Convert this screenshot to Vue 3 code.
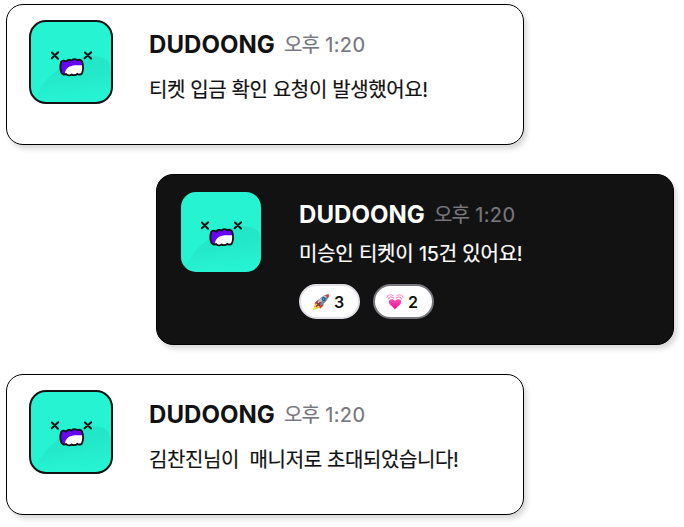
<script setup>
const messages = [
  { id: 1, dark: false, text: '티켓 입금 확인 요청이 발생했어요!', reactions: [] },
  {
    id: 2,
    dark: true,
    text: '미승인 티켓이 15건 있어요!',
    reactions: [
      { kind: 'rocket', count: 3 },
      { kind: 'heart', count: 2 },
    ],
  },
  { id: 3, dark: false, text: '김찬진님이  매니저로 초대되었습니다!', reactions: [] },
]
</script>

<template>
  <main class="thread">
    <article v-for="m in messages" :key="m.id" class="card" :class="{ dark: m.dark }">
      <svg class="avatar" viewBox="0 0 84 84">
        <defs>
          <linearGradient :id="'hill' + m.id" x1="0.3" y1="0" x2="0.5" y2="1">
            <stop offset="0" stop-color="#22e5c5" />
            <stop offset="0.45" stop-color="#23e8c9" />
            <stop offset="0.95" stop-color="#26f3d2" />
          </linearGradient>
        </defs>
        <rect x="1" y="1" width="82" height="82" rx="16" fill="#26f3d2" />
        <path d="M7 77C13 61 27 49 41 43C51 36.500 64 35 73 37.500C80 40 82 45 82 56V68C82 76 76 81 68 81H16Z" :fill="`url(#hill${m.id})`" />
        <rect x="1" y="1" width="82" height="82" rx="16" fill="none" stroke="#121212" stroke-width="2" />
        <g fill="none" stroke="#121212" stroke-width="2" stroke-linecap="round">
          <path d="M23 32.500L29 38.800M29.200 32.300L22.800 38.300M56 32.500L62 38.500M62.200 32.300L55.600 38.300" />
        </g>
        <path d="M32.200 41.700C33.200 40 36.200 40.500 37.400 41.700C37.800 39.800 41.400 39.300 42.600 40.600C43.600 38.700 47.400 38.800 48.300 40.300C49.800 39.300 52.400 39.800 53 41.300C54.300 44.700 54.300 50 52.800 53.700C51.700 55 49.300 54.900 48.300 53.800C46.800 55.500 43.800 55.500 42.700 54.500C41 56 38.200 55.400 37.200 54C35.300 55.100 33.100 54.400 32.300 52.500C31.100 49.300 31 45.100 32.200 41.700Z" fill="#6506f5" />
        <path d="M36 53.500C36.100 48.500 41 45.300 46 45.200H53.500V53.500L48.300 53.800C46.500 55 44.300 55 42.700 54.500C40.700 55.500 38.300 55.200 37.200 54Z" fill="#fff" />
        <path d="M32.200 41.700C33.200 40 36.200 40.500 37.400 41.700C37.800 39.800 41.400 39.300 42.600 40.600C43.600 38.700 47.400 38.800 48.300 40.300C49.800 39.300 52.400 39.800 53 41.300C54.300 44.700 54.300 50 52.800 53.700C51.700 55 49.300 54.900 48.300 53.800C46.800 55.500 43.800 55.500 42.700 54.500C41 56 38.200 55.400 37.200 54C35.300 55.100 33.100 54.400 32.300 52.500C31.100 49.300 31 45.100 32.200 41.700Z" fill="none" stroke="#121212" stroke-width="1.800" stroke-linejoin="round" />
      </svg>
      <div class="content">
        <header class="head">
          <span class="name">DUDOONG</span>
          <span class="time"><span class="ko">오후</span> 1:20</span>
        </header>
        <p class="text">{{ m.text }}</p>
        <div v-if="m.reactions.length" class="reactions">
          <span v-for="r in m.reactions" :key="r.kind" class="pill" :class="r.kind">
            <svg v-if="r.kind === 'rocket'" class="emoji" viewBox="0 0 18 18">
              <path d="M1 17L3.200 9.800L8.500 14.500Z" fill="#ffb52b" />
              <path d="M1 17L5 10.500L7.300 13Z" fill="#fff05a" />
              <path d="M2.400 10.200L6 6.700L8.700 6.500L6 11.200ZM7 12L11.300 9.200L11.400 12.400L8 15.800Z" fill="#e92e22" />
              <path d="M4.800 10.800C6.200 6.200 10.800 1.800 16.800 1.200C16.900 6.400 12 11.500 7.200 13.300Z" fill="#718da3" />
              <path d="M5 10.600C7 5.700 11.300 2.400 16.600 1.400L6.300 11.800Z" fill="#b9cad6" />
              <path d="M13.200 1.900L16.800 1.200C16.900 2.800 16.600 4 16.100 5.200Z" fill="#dc372d" />
              <circle cx="11.600" cy="6.100" r="2" fill="#174f79" />
              <circle cx="11.500" cy="6" r="1.100" fill="#36a8dc" />
              <path d="M4.800 10.800L7.300 13.200L8.700 12.500L5.300 9.300Z" fill="#3c4b59" />
              <path d="M4.300 13.500L8.300 9.600" stroke="#b51e22" stroke-width="1.400" stroke-linecap="round" />
            </svg>
            <svg v-else class="emoji" viewBox="0 0 18 18">
              <defs>
                <linearGradient id="pink" x1="0" y1="0" x2="0" y2="1">
                  <stop offset="0" stop-color="#ff4fb0" />
                  <stop offset="1" stop-color="#ee0a98" />
                </linearGradient>
              </defs>
              <path d="M9 16.700C7.600 13.900 2.800 12.200 2.800 8.600C2.800 5.600 7.400 5.300 9 8C10.600 5.300 15.200 5.600 15.200 8.600C15.200 12.200 10.400 13.900 9 16.700Z" fill="url(#pink)" />
              <g fill="none" stroke-linecap="round" stroke-width="1.100">
                <path d="M2.600 5.700C3.300 3.800 5.700 3.400 7.600 5M15.400 5.700C14.700 3.800 12.300 3.400 10.400 5" stroke="#ff78c2" />
                <path d="M0.900 4.500C1.700 1.900 4.700 1 7.200 2.700M17.100 4.500C16.300 1.900 13.300 1 10.800 2.700" stroke="#ff92cf" />
              </g>
            </svg>
            <span class="count">{{ r.count }}</span>
          </span>
        </div>
      </div>
    </article>
  </main>
</template>

<style>
body {
  background: #fff;
}
</style>

<style scoped>
.thread {
  box-sizing: border-box;
  width: 684px;
  height: 527px;
  padding: 4px 10px 0 6px;
  display: flex;
  flex-direction: column;
  gap: 29px;
  overflow: hidden;
  font-family: Inter, "Noto Sans CJK KR", sans-serif;
  color: #121212;
}
.card {
  box-sizing: border-box;
  flex: none;
  width: 518px;
  height: 141px;
  padding: 14.5px 22px;
  display: flex;
  gap: 36px;
  border: 1px solid #000;
  border-radius: 17px;
  background: #fff;
  box-shadow: 3px 4px 5px rgba(0, 0, 0, 0.15);
}
.card.dark {
  align-self: flex-end;
  height: 171px;
  background: #121212;
  color: #fff;
}
.avatar {
  flex: none;
  width: 84px;
  height: 84px;
}
.content {
  display: flex;
  flex-direction: column;
  padding-top: 10.5px;
}
.head {
  display: flex;
  align-items: center;
  gap: 9px;
  height: 30px;
}
.name {
  font-size: 24px;
  line-height: 30px;
  font-weight: 700;
  letter-spacing: 0.05px;
}
.time {
  font-size: 20px;
  line-height: 30px;
  letter-spacing: 0.35px;
  color: #77777d;
  -webkit-text-stroke: 0.2px currentColor;
}
.ko {
  letter-spacing: -0.7px;
}
.text {
  margin: 15px 0 0;
  font-size: 20px;
  line-height: 30px;
  font-weight: 400;
  letter-spacing: -0.38px;
  white-space: pre;
  -webkit-text-stroke: 0.2px currentColor;
}
.dark .text {
  margin-top: 9px;
  letter-spacing: -0.22px;
}
.reactions {
  display: flex;
  gap: 13px;
  margin-top: 15px;
}
.pill {
  box-sizing: border-box;
  width: 61px;
  height: 35px;
  padding-left: 11px;
  display: flex;
  align-items: center;
  gap: 4px;
  border: 2px solid #dfdfe5;
  border-radius: 18px;
  background: #fff;
  color: #121212;
}
.pill.heart {
  border-color: #77777d;
}
.emoji {
  width: 18px;
  height: 18px;
}
.count {
  font-size: 16px;
  line-height: 20px;
  font-weight: 600;
}
</style>
